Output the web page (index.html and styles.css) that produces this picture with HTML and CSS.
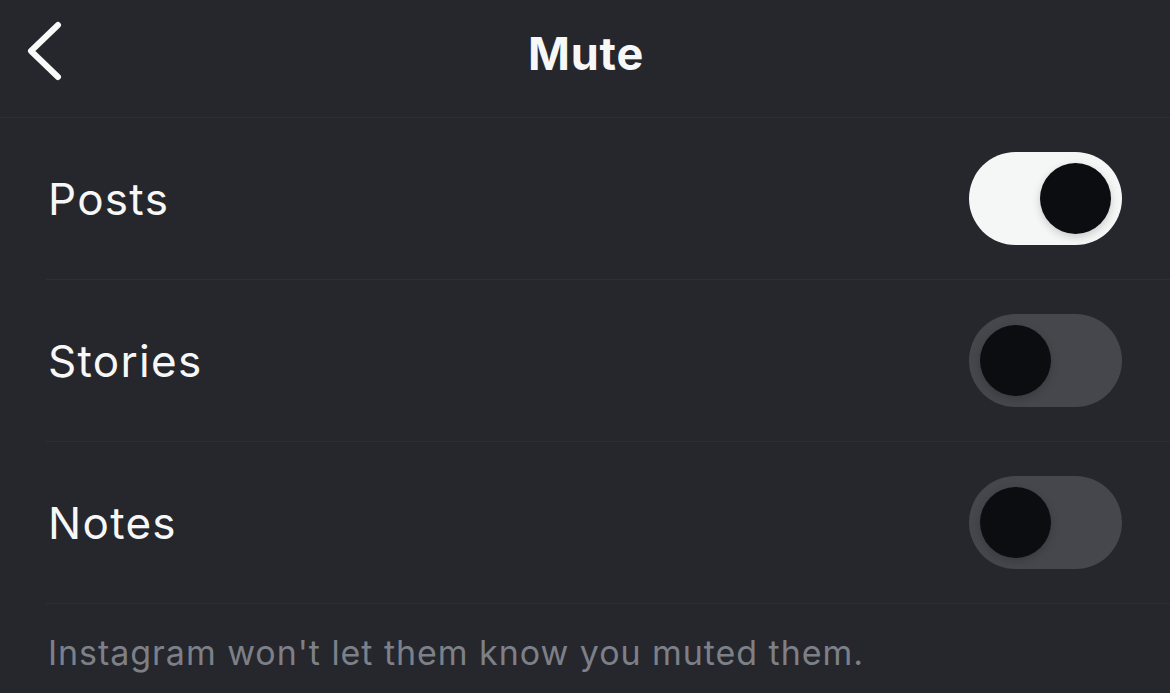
FILE: index.html
```html
<!DOCTYPE html>
<html>
<head>
  <meta http-equiv="Content-Type" content="text/html; charset=UTF-8">
  <title>Mute</title>
  <link rel="stylesheet" href="styles.css">
</head>
<body>
  <div class="header">
    <a class="back" href="#">
      <svg width="36" height="60" viewBox="0 0 36 60">
        <path d="M32 4 L5 30 L32 56" fill="none" stroke="#fafafa" stroke-width="6" stroke-linecap="round" stroke-linejoin="round"/>
      </svg>
    </a>
    <h1>Mute</h1>
  </div>

  <div class="list">
    <div class="row">
      <span class="label">Posts</span>
      <span class="toggle on"><span class="knob"></span></span>
    </div>
    <div class="row">
      <span class="label">Stories</span>
      <span class="toggle"><span class="knob"></span></span>
    </div>
    <div class="row">
      <span class="label">Notes</span>
      <span class="toggle"><span class="knob"></span></span>
    </div>
  </div>

  <p class="note">Instagram won't let them know you muted them.</p>
</body>
</html>
```

FILE: styles.css
```css
html, body {
  margin: 0;
  padding: 0;
  height: 100%;
}
body {
  background-color: #25272c;
  color: #f7f7f7;
  font-family: Inter, "Noto Sans", sans-serif;
  overflow: hidden;
}
.header {
  box-sizing: border-box;
  height: 118px;
  padding-bottom: 10px;
  border-bottom: 1px solid #2d2f34;
  display: flex;
  align-items: center;
  justify-content: center;
  position: relative;
}
.header h1 {
  margin: 0;
  font-size: 45px;
  font-weight: 700;
  letter-spacing: 0.8px;
  padding-left: 2px;
}
.back {
  position: absolute;
  left: 26px;
  top: 21px;
  display: block;
  line-height: 0;
}
.list {
  margin-left: 46px;
}
.row {
  box-sizing: border-box;
  height: 162px;
  border-bottom: 1px solid #2d2f34;
  display: flex;
  align-items: center;
  justify-content: space-between;
  padding-right: 48px;
  padding-left: 2px;
}
.label {
  font-size: 44px;
  font-weight: 400;
  letter-spacing: 1.3px;
}
.toggle {
  box-sizing: border-box;
  width: 153px;
  height: 93px;
  border-radius: 47px;
  background-color: #45474d;
  padding: 11px;
  display: flex;
  align-items: center;
  justify-content: flex-start;
}
.toggle.on {
  background-color: #f5f6f6;
  justify-content: flex-end;
}
.knob {
  width: 71px;
  height: 71px;
  border-radius: 50%;
  background-color: #0b0d11;
  box-shadow: 0 3px 8px rgba(0, 0, 0, 0.18);
}
.note {
  margin: 0;
  padding: 28px 0 0 48px;
  font-size: 34px;
  color: #7d8088;
  letter-spacing: 0.95px;
}
```
